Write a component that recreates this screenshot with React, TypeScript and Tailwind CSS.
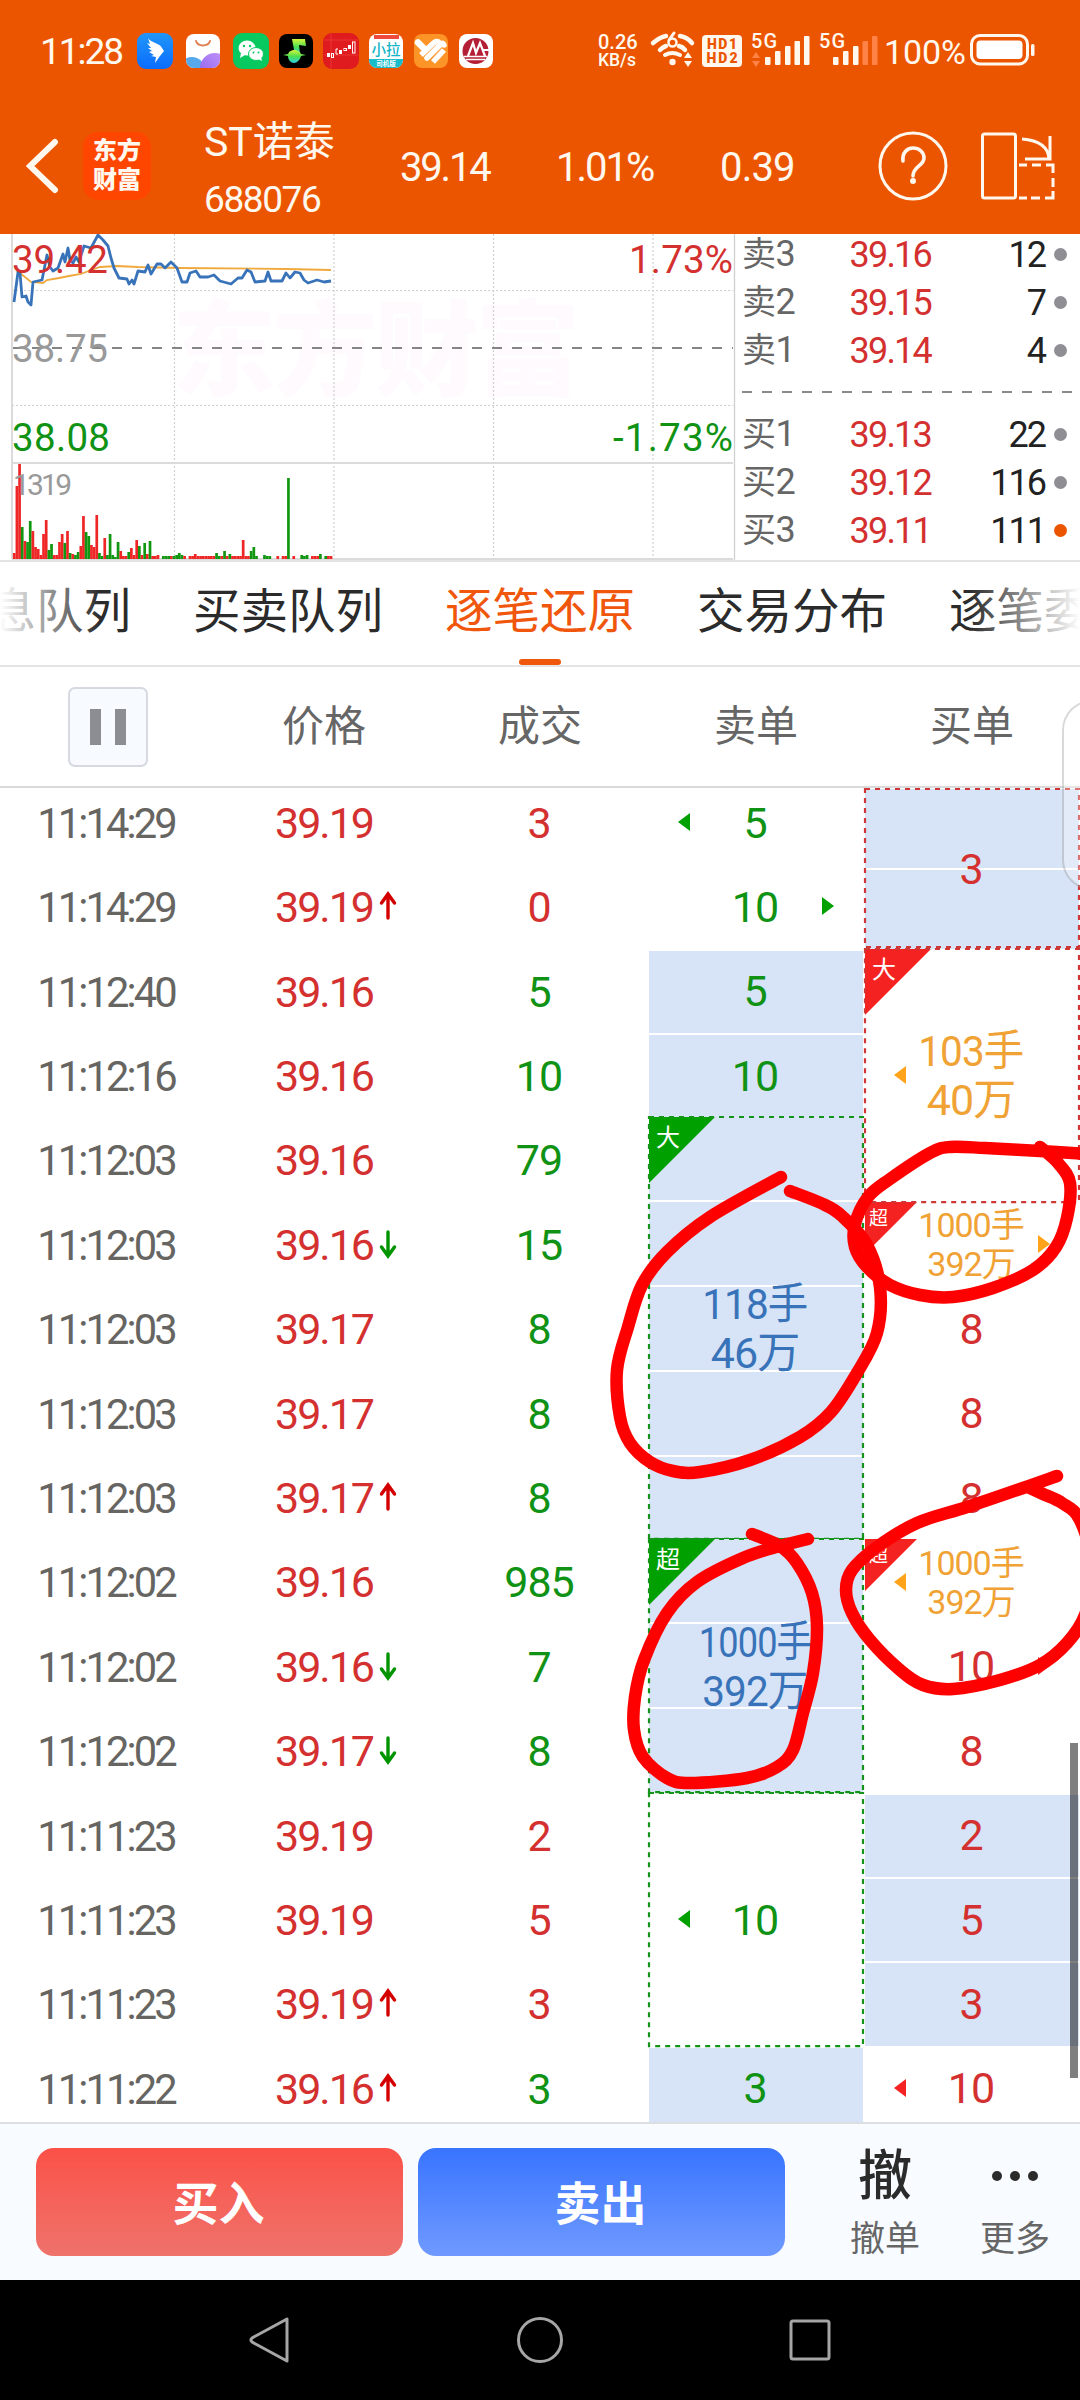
import React from 'react';
import clsx from 'clsx';

type Tone = 'red' | 'green' | 'orange' | 'blue';

interface Tick {
  time: string;
  price: string;
  dir?: 'up' | 'down';
  volume: string;
  tone: 'red' | 'green';
}

/**
 * One order in the sell / buy column. It may span several ticks.
 */
interface OrderBlock {
  span: string;
  rows: number;
  lines: string[];
  tone: Tone;
  filled?: boolean;
  framed?: 'red' | 'green';
  tag?: string;
  tagTone?: 'red' | 'green';
  arrow?: 'left' | 'right';
  small?: boolean;
  first?: boolean;
}

const TONE_TEXT: Record<Tone, string> = {
  red: 'text-[#d3302f]',
  green: 'text-[#109214]',
  orange: 'text-[#f0a235]',
  blue: 'text-[#3873b9]'
};

const TONE_FILL: Record<Tone, string> = {
  red: '#f52222',
  green: '#00a000',
  orange: '#ffa31a',
  blue: '#3873b9'
};

const TICKS: Tick[] = [
  { time: '11:14:29', price: '39.19', volume: '3', tone: 'red' },
  { time: '11:14:29', price: '39.19', dir: 'up', volume: '0', tone: 'red' },
  { time: '11:12:40', price: '39.16', volume: '5', tone: 'green' },
  { time: '11:12:16', price: '39.16', volume: '10', tone: 'green' },
  { time: '11:12:03', price: '39.16', volume: '79', tone: 'green' },
  { time: '11:12:03', price: '39.16', dir: 'down', volume: '15', tone: 'green' },
  { time: '11:12:03', price: '39.17', volume: '8', tone: 'green' },
  { time: '11:12:03', price: '39.17', volume: '8', tone: 'green' },
  { time: '11:12:03', price: '39.17', dir: 'up', volume: '8', tone: 'green' },
  { time: '11:12:02', price: '39.16', volume: '985', tone: 'green' },
  { time: '11:12:02', price: '39.16', dir: 'down', volume: '7', tone: 'green' },
  { time: '11:12:02', price: '39.17', dir: 'down', volume: '8', tone: 'green' },
  { time: '11:11:23', price: '39.19', volume: '2', tone: 'red' },
  { time: '11:11:23', price: '39.19', volume: '5', tone: 'red' },
  { time: '11:11:23', price: '39.19', dir: 'up', volume: '3', tone: 'red' },
  { time: '11:11:22', price: '39.16', dir: 'up', volume: '3', tone: 'green' }
];

const SELL_ORDERS: OrderBlock[] = [
  { span: 'row-span-1', rows: 1, lines: ['5'], tone: 'green', arrow: 'left' },
  { span: 'row-span-1', rows: 1, lines: ['10'], tone: 'green', arrow: 'right' },
  { span: 'row-span-1', rows: 1, lines: ['5'], tone: 'green', filled: true },
  { span: 'row-span-1', rows: 1, lines: ['10'], tone: 'green', filled: true },
  { span: 'row-span-5', rows: 5, lines: ['118手', '46万'], tone: 'blue', filled: true, framed: 'green', tag: '大', tagTone: 'green' },
  { span: 'row-span-3', rows: 3, lines: ['1000手', '392万'], tone: 'blue', filled: true, framed: 'green', tag: '超', tagTone: 'green' },
  { span: 'row-span-3', rows: 3, lines: ['10'], tone: 'green', framed: 'green', arrow: 'left' },
  { span: 'row-span-1', rows: 1, lines: ['3'], tone: 'green', filled: true }
];

const BUY_ORDERS: OrderBlock[] = [
  { span: 'row-span-2', rows: 2, lines: ['3'], tone: 'red', filled: true, framed: 'red', first: true },
  { span: 'row-span-3', rows: 3, lines: ['103手', '40万'], tone: 'orange', framed: 'red', tag: '大', tagTone: 'red', arrow: 'left' },
  { span: 'row-span-1', rows: 1, lines: ['1000手', '392万'], tone: 'orange', tag: '超', tagTone: 'red', arrow: 'right', small: true },
  { span: 'row-span-1', rows: 1, lines: ['8'], tone: 'red' },
  { span: 'row-span-1', rows: 1, lines: ['8'], tone: 'red' },
  { span: 'row-span-1', rows: 1, lines: ['8'], tone: 'red' },
  { span: 'row-span-1', rows: 1, lines: ['1000手', '392万'], tone: 'orange', tag: '超', tagTone: 'red', arrow: 'left', small: true },
  { span: 'row-span-1', rows: 1, lines: ['10'], tone: 'red', arrow: 'right' },
  { span: 'row-span-1', rows: 1, lines: ['8'], tone: 'red' },
  { span: 'row-span-1', rows: 1, lines: ['2'], tone: 'red', filled: true },
  { span: 'row-span-1', rows: 1, lines: ['5'], tone: 'red', filled: true },
  { span: 'row-span-1', rows: 1, lines: ['3'], tone: 'red', filled: true },
  { span: 'row-span-1', rows: 1, lines: ['10'], tone: 'red', arrow: 'left' }
];

const ASKS = [
  ['卖3', '39.16', '12'],
  ['卖2', '39.15', '7'],
  ['卖1', '39.14', '4']
];

const BIDS = [
  ['买1', '39.13', '22'],
  ['买2', '39.12', '116'],
  ['买3', '39.11', '111']
];

const TABS = ['信息队列', '买卖队列', '逐笔还原', '交易分布', '逐笔委托'];

const PRICE_LINE =
  '14,68 18,38 20,39 22,63 26,62 28,68 31,71 33,48 42,46 47,21 50,33 53,37 58,34 63,20 65,28 68,14 70,26 73,29 76,23 79,28 84,12 91,14 98,1 103,6 108,12 111,24 114,34 119,44 127,45 129,50 132,46 134,50 138,37 145,38 148,31 151,40 157,30 161,30 165,34 171,28 177,34 182,48 187,48 190,39 196,37 200,43 208,43 214,41 220,47 231,50 238,44 242,44 247,36 251,38 255,48 265,47 268,38 271,47 282,47 286,39 290,44 295,38 300,39 304,46 308,49 317,46 324,48 331,47';

const AVERAGE_LINE =
  '20,39 31,48 43,49 47,46 59,44 69,42 81,40 91,36 100,33 117,32 138,33 179,34 286,35 331,36';

// r = up minute, g = down minute, - = no trade
const VOLUME =
  'r6 r73 r95 g32 r18 g17 g38 r28 r12 r10 r4 r25 r39 g9 g15 r4 r4 r17 r25 g16 r28 g6 r5 g4 g7 r13 r43 g27 g23 r14 r12 r44 g6 g3 r21 g4 g25 g4 g2 g17 r8 r3 r3 g7 r11 r4 r19 g13 r4 g16 r5 g18 r3 r3 r4 - g3 g3 g3 r3 g3 g4 g6 g4 r3 - r3 r3 r5 r3 r3 r3 r3 r3 r3 r3 g6 g3 r3 g8 r3 g5 r3 r3 r3 r3 r19 r3 r3 g8 g12 g3 - - g4 g3 g3 - - r3 - r3 r3 g81 - r3 - - g4 g3 g4 - r3 r3 r3 g5 - g3 r3 r3'.split(' ');

const MARKS: number[][][] = [
  [[781, 1177], [710, 1217], [667, 1252], [642, 1285], [628, 1327], [617, 1370], [620, 1417], [630, 1443], [650, 1462], [673, 1471], [700, 1472], [750, 1460], [800, 1437], [831, 1412], [857, 1373], [877, 1333], [880, 1287], [867, 1245], [843, 1217], [823, 1204], [790, 1191]],
  [[1090, 1154], [1040, 1151], [985, 1148], [950, 1147], [930, 1153], [890, 1179], [868, 1197], [855, 1224], [855, 1247], [867, 1267], [890, 1285], [920, 1295], [953, 1297], [993, 1288], [1033, 1270], [1056, 1247], [1067, 1218], [1070, 1183], [1058, 1163], [1040, 1147]],
  [[808, 1539], [780, 1546], [743, 1558], [697, 1582], [667, 1613], [644, 1660], [635, 1697], [634, 1730], [643, 1757], [667, 1778], [690, 1783], [747, 1778], [777, 1767], [793, 1750], [803, 1713], [813, 1673], [817, 1627], [812, 1593], [797, 1563], [780, 1546], [752, 1534]],
  [[1057, 1476], [1023, 1488], [967, 1507], [917, 1523], [877, 1547], [852, 1570], [846, 1590], [852, 1613], [870, 1640], [900, 1670], [923, 1685], [953, 1689], [1000, 1680], [1040, 1665], [1067, 1643], [1085, 1615], [1094, 1570], [1080, 1520], [1062, 1503], [1043, 1494], [1028, 1487]]
];

// Catmull-Rom spline through the sampled points
const toSpline = (pts: number[][]) => {
  let d = `M${pts[0][0]} ${pts[0][1]}`;
  for (let i = 0; i < pts.length - 1; i++) {
    const p0 = pts[i - 1] || pts[i];
    const p1 = pts[i];
    const p2 = pts[i + 1];
    const p3 = pts[i + 2] || p2;
    d += `C${p1[0] + (p2[0] - p0[0]) / 6} ${p1[1] + (p2[1] - p0[1]) / 6} ${p2[0] - (p3[0] - p1[0]) / 6} ${p2[1] - (p3[1] - p1[1]) / 6} ${p2[0]} ${p2[1]}`;
  }
  return d;
};

const AppIcons: React.FC = () => (
  <svg width="360" height="40" viewBox="136 32 360 40">
    <defs>
      <linearGradient id="blueApp" x1="0" y1="0" x2="0" y2="1">
        <stop offset="0" stopColor="#2196f8" />
        <stop offset="1" stopColor="#0a6cff" />
      </linearGradient>
      <linearGradient id="noteApp" x1="0" y1="0" x2="0" y2="1">
        <stop offset="0" stopColor="#d5f53c" />
        <stop offset="0.5" stopColor="#4ade50" />
        <stop offset="1" stopColor="#2fd0e8" />
      </linearGradient>
      <linearGradient id="purpleApp" x1="0" y1="1" x2="1" y2="0">
        <stop offset="0" stopColor="#8b5ce8" />
        <stop offset="1" stopColor="#c79bff" />
      </linearGradient>
      <clipPath id="bagClip">
        <rect x="186" y="35" width="34" height="34" rx="8" />
      </clipPath>
      <clipPath id="cityClip">
        <rect x="369" y="35" width="34" height="34" rx="8" />
      </clipPath>
    </defs>

    {/* wing */}
    <rect x="137" y="34" width="36" height="36" rx="9" fill="url(#blueApp)" />
    <path d="M148 39c3 5 12 5 14 10l2 3-4 5-5 7 1-6-5-1 3-1-5-3 3-1-4-3 3 0-4-5 3 1z" fill="#fff" />

    {/* shopping bag */}
    <rect x="186" y="35" width="34" height="34" rx="8" fill="#fff" />
    <g clipPath="url(#bagClip)">
      <circle cx="192" cy="71" r="13" fill="#58a9ec" />
      <circle cx="215" cy="69" r="15" fill="url(#purpleApp)" />
    </g>
    <path d="M196 42c2 6 12 6 14 0" fill="none" stroke="#e08055" strokeWidth="2" strokeLinecap="round" />

    {/* chat bubbles */}
    <rect x="233" y="34" width="36" height="36" rx="9" fill="#08c960" />
    <ellipse cx="247" cy="49" rx="8.5" ry="7.5" fill="#fff" />
    <path d="M241 54l-1 5 5-3z" fill="#fff" />
    <ellipse cx="256" cy="55" rx="7.5" ry="6.5" fill="#fff" stroke="#08c960" strokeWidth="1" />
    <path d="M261 58l1 4-4-2z" fill="#fff" />
    <g fill="#08c960">
      <circle cx="244" cy="47" r="1.2" />
      <circle cx="250" cy="47" r="1.2" />
      <circle cx="253.500" cy="53.500" r="1" />
      <circle cx="258.500" cy="53.500" r="1" />
    </g>

    {/* music note */}
    <rect x="279" y="35" width="34" height="34" rx="8" fill="#000" />
    <path d="M292 40h13l1 7-7-1 1 9-5 1z" fill="url(#noteApp)" />
    <path d="M283 56l5-1c1-3 4-4 6-4s6 1 7 4l5 1-5 1c-1 4-4 7-7 7s-6-3-6-7z" fill="url(#noteApp)" />

    {/* candles */}
    <rect x="323" y="34" width="36" height="36" rx="9" fill="#e01b1f" />
    <path d="M324 41h34M324 56h34M331 35v34" stroke="#f0504f" strokeWidth="0.500" />
    <g fill="#fff">
      <rect x="327" y="54" width="3" height="4" />
      <rect x="339" y="51" width="3" height="4" />
      <rect x="348" y="46" width="3" height="4" />
    </g>
    <g fill="none" stroke="#fff" strokeWidth="1">
      <rect x="331.500" y="54.500" width="2" height="4" />
      <path d="M338 50h-2v5h2" />
      <rect x="344" y="49.500" width="2.500" height="2" />
      <rect x="352.500" y="43" width="2.500" height="11" />
    </g>

    {/* city delivery */}
    <rect x="369" y="35" width="34" height="34" rx="8" fill="#fff" />
    <g clipPath="url(#cityClip)">
      <rect x="369" y="60" width="34" height="10" fill="#18bccb" />
      <rect x="374" y="36" width="25" height="4" fill="#ee4b3e" />
    </g>
    <text x="386" y="56" fontSize="14.500" fontWeight="500" fill="#12b4c6" textAnchor="middle">小拉</text>
    <text x="386" y="67" fontSize="6.500" fontWeight="700" fill="#fff" textAnchor="middle">司机版</text>

    {/* orange heart stripes */}
    <rect x="414" y="35" width="34" height="34" rx="8" fill="#fd9428" />
    <g fill="none" stroke="#fff" strokeWidth="5.500">
      <path d="M418 43.500l7 7" strokeWidth="6.500" strokeLinecap="round" />
      <path d="M421 56l12-11.500q4-3.500 6-1" />
      <path d="M427 59l14-14q2-2 3 1" strokeLinecap="round" />
      <path d="M433 63l11-12" />
    </g>

    {/* bank */}
    <rect x="459" y="35" width="34" height="34" rx="8" fill="#fff" />
    <circle cx="475.500" cy="52" r="13" fill="#b51f35" />
    <path d="M464 57.500h23M466 60.500h19" stroke="#fff" strokeWidth="1.300" />
    <path d="M468 57l5-13 3 10 4-10 5 13M483 51h8" fill="none" stroke="#fff" strokeWidth="2.200" />
  </svg>
);

const StatusIcons: React.FC = () => (
  <svg width="392" height="44" viewBox="648 28 392 44" fill="#fff8ee">
    {/* wifi 6 */}
    <g fill="none" stroke="#fff8ee" strokeWidth="4.500" strokeLinecap="round">
      <path d="M653 42q7-6 13-7M680 35q7 1 12 7" />
      <path d="M660 49q3-3 6-4M679 45q4 1 6 4" />
      <path d="M665 54q7-4 15 0" strokeWidth="4" />
    </g>
    <path d="M674 32l-5 7" stroke="#fff8ee" strokeWidth="3" strokeLinecap="round" />
    <circle cx="672.500" cy="41.500" r="4" fill="none" stroke="#fff8ee" strokeWidth="2.500" />
    <circle cx="672.500" cy="61" r="3.200" />
    <path d="M684 57l4-6 4 6zM684 60l4 6 4-6z" />

    {/* HD badges */}
    <rect x="702" y="34" width="40" height="32" rx="4" />
    <g fill="#ec5500" fontSize="14" fontWeight="900" textAnchor="middle">
      <text x="722" y="48" textLength="30">HD1</text>
      <text x="722" y="62" textLength="31">HD2</text>
    </g>

    {/* signal bars */}
    <g fontSize="20" fontWeight="500">
      <text x="751" y="47" textLength="26">5G</text>
      <text x="819" y="47" textLength="26">5G</text>
    </g>
    <path d="M752 57l4-6 4 6zM752 60l4 6 4-6z" fill="#ff8346" />
    <g>
      <rect x="765" y="56" width="5.500" height="8" rx="1" />
      <rect x="775" y="50" width="5.500" height="14" rx="1" />
      <rect x="785" y="45" width="5.500" height="19" rx="1" />
      <rect x="794.500" y="40" width="5.500" height="24" rx="1" />
      <rect x="804" y="35" width="5.500" height="29" rx="1" />
      <rect x="833" y="56" width="5.500" height="8" rx="1" />
      <rect x="843" y="50" width="5.500" height="14" rx="1" />
      <rect x="853" y="45" width="5.500" height="19" rx="1" />
      <rect x="862.500" y="40" width="5.500" height="24" rx="1" fill="#ff8346" />
      <rect x="872" y="35" width="5.500" height="29" rx="1" fill="#ff8346" />
    </g>
    <text x="884" y="63" fontSize="34" textLength="82">100%</text>

    {/* battery */}
    <rect x="971.500" y="34.500" width="56" height="28.500" rx="8.500" fill="none" stroke="#fff8ee" strokeWidth="3" />
    <rect x="976.500" y="39.500" width="46" height="18.500" rx="4" fill="#fff" />
    <rect x="1031" y="43" width="3.500" height="12" rx="1.500" />
  </svg>
);

const Header: React.FC = () => (
  <header className="h-[234px] bg-[#ec5500] text-[#fff8ee]">
    <div className="flex h-[102px] items-center pl-[40px]">
      <span className="w-[96px] pt-px text-[37px] tracking-[-2px]">11:28</span>
      <AppIcons />
      <div className="ml-[102px] flex w-[50px] flex-col font-medium">
        <span className="text-[20px] leading-[18px]">0.26</span>
        <span className="text-[17.500px] leading-[18px]">KB/s</span>
      </div>
      <StatusIcons />
    </div>

    <div className="flex h-[128px] items-center pl-[26px]">
      <svg width="34" height="60" viewBox="0 0 34 60" fill="none" stroke="#fff8ee" strokeWidth="6" strokeLinecap="round">
        <path d="M29 6L4 30l25 24" />
      </svg>
      <div className="ml-[23px] flex size-[68px] flex-col items-center justify-center rounded-[15px] bg-[#ff4600] text-[24px] leading-[29px] font-black">
        <span>东方</span>
        <span>财富</span>
      </div>
      <div className="ml-[53px] flex w-[196px] flex-col pt-[11px]">
        <span className="text-[41px] leading-[56px]">ST诺泰</span>
        <span className="text-[37px] leading-[60px] tracking-[-1.4px]">688076</span>
      </div>
      <span className="w-[156px] pt-[3px] text-[40px] tracking-[-2.2px]">39.14</span>
      <span className="w-[164px] pt-[3px] text-[40px] tracking-[-2px]">1.01%</span>
      <span className="w-[157px] pt-[3px] text-[40px] tracking-[-0.8px]">0.39</span>
      <svg width="72" height="72" viewBox="0 0 72 72" fill="none" stroke="#fff8ee" strokeWidth="3">
        <circle cx="36" cy="36" r="33" />
        <path d="M26 31c-1-8 4-13 10-13s11 4 11 10c0 8-11 8-11 18" strokeWidth="3.600" strokeLinecap="round" />
        <circle cx="36" cy="51" r="3" fill="#fff8ee" stroke="none" />
      </svg>
      <svg className="ml-[31px]" width="76" height="72" viewBox="0 0 76 72" fill="none" stroke="#fff8ee" strokeWidth="3">
        <rect x="2.500" y="4" width="33" height="64" rx="2" />
        <path d="M42 9q26 2 27 20M70 6v23H45" />
        <path d="M39 35h8M52 35h9M66 35h7v8M73 48v9M73 61v7h-8M60 68h-9M47 68h-8" />
      </svg>
    </div>
  </header>
);

const PriceChart: React.FC = () => (
  <svg className="shrink-0" width="736" height="326" viewBox="0 0 736 326">
    <text x="172" y="154" fontSize="104" fontWeight="900" fill="#fefafe" textLength="408">东方财富</text>

    <g stroke="#cfcfcf" strokeDasharray="2 2" strokeWidth="1.200">
      <path d="M174.500 0V325M334 0V325M493.500 0V325M653 0V325" />
      <path d="M12 56.500H733M12 171.500H733" />
    </g>
    <path d="M12 114H733" stroke="#858585" strokeWidth="2" strokeDasharray="10 10" />
    <path d="M12 0V325M12 229H733M12 325H733" stroke="#dcdada" strokeWidth="2" fill="none" />
    <path d="M734.500 0V326" stroke="#cfcfcf" strokeWidth="1.300" />

    {VOLUME.map((bar, i) =>
      bar === '-' ? null : (
        <rect
          key={i}
          x={12.9 + i * 2.662}
          y={325 - Number(bar.slice(1))}
          width="2.700"
          height={bar.slice(1)}
          fill={bar[0] === 'r' ? '#ee2626' : '#109610'}
        />
      )
    )}
    <polyline points={AVERAGE_LINE} fill="none" stroke="#f0a93c" strokeWidth="1.800" />
    <polyline points={PRICE_LINE} fill="none" stroke="#3873b9" strokeWidth="2.800" strokeLinejoin="round" />

    <g fontSize="38.500">
      <text x="12" y="38.500" fill="#d3302f" textLength="96">39.42</text>
      <text x="12" y="127.500" fill="#999" textLength="96">38.75</text>
      <text x="12" y="216.500" fill="#109214" textLength="98">38.08</text>
      <text x="629" y="38.500" fill="#d3302f" textLength="104">1.73%</text>
      <text x="613" y="216.500" fill="#109214" textLength="120">-1.73%</text>
    </g>
    <text x="13" y="260.500" fontSize="30" fill="#999" textLength="59">1319</text>
  </svg>
);

const QuoteRow: React.FC<{ quote: string[]; hot?: boolean }> = ({ quote, hot }) => (
  <div className="flex h-[48px] items-center text-[36px]">
    <span className="w-[70px] tracking-[-0.500px] text-[#666]">
      <span className="text-[34px]">{quote[0][0]}</span>
      {quote[0][1]}
    </span>
    <span className="w-[119px] pt-px text-right tracking-[-1.800px] text-[#d3302f]">{quote[1]}</span>
    <span className="w-[114px] pt-px text-right tracking-[-2px] text-[#222]">{quote[2]}</span>
    <span className={clsx('ml-[9px] size-[13px] rounded-full', hot ? 'bg-[#ec5500]' : 'bg-[#8f8e94]')} />
  </div>
);

const OrderBook: React.FC = () => (
  <div className="-mt-[4px] flex flex-1 flex-col pl-[6px]">
    {ASKS.map((q) => (
      <QuoteRow key={q[0]} quote={q} />
    ))}
    <svg className="h-[36px] w-[332px]" viewBox="0 0 332 36">
      <path d="M0 18H332" stroke="#8a8a8a" strokeWidth="2" strokeDasharray="10 10" />
    </svg>
    {BIDS.map((q, i) => (
      <QuoteRow key={q[0]} quote={q} hot={i === 2} />
    ))}
  </div>
);

const TabBar: React.FC = () => (
  <nav className="relative flex h-[107px] overflow-hidden border-y-2 border-[#e4e4e4] bg-white">
    <div className="-ml-[60px] flex gap-[60px]">
      {TABS.map((tab, i) => (
        <div key={tab} className="flex w-[192px] shrink-0 flex-col items-center">
          <span
            className={clsx(
              'h-[97px] text-[47.500px] leading-[101px] whitespace-nowrap',
              i === 2 ? 'text-[#f0560c]' : 'text-[#2b2b2b]'
            )}
          >
            {tab}
          </span>
          {i === 2 && <span className="h-[6px] w-[42px] rounded-[3px] bg-[#f0560c]" />}
        </div>
      ))}
    </div>
    <div className="absolute inset-y-0 left-0 w-[100px] bg-linear-to-r from-white to-transparent" />
    <div className="absolute inset-y-0 right-0 w-[110px] bg-linear-to-l from-white to-transparent" />
  </nav>
);

const TableHead: React.FC = () => (
  <div className="grid h-[121px] grid-cols-5 items-center border-b-2 border-[#dadada] text-center text-[42px] text-[#666]">
    <div className="flex justify-center pr-px">
      <div className="flex size-[80px] items-center justify-center gap-[14px] rounded-[7px] border-2 border-[#d6d9e2] bg-[#f7faff]">
        <span className="h-[36px] w-[11px] bg-[#8c8d92]" />
        <span className="h-[36px] w-[11px] bg-[#8c8d92]" />
      </div>
    </div>
    <span>价格</span>
    <span>成交</span>
    <span>卖单</span>
    <span>买单</span>
  </div>
);

const PriceArrow: React.FC<{ dir: 'up' | 'down' }> = ({ dir }) => (
  <svg
    className={clsx('absolute top-[27px] left-[163px]', dir === 'down' && 'rotate-180')}
    width="18"
    height="30"
    viewBox="0 0 18 30"
    fill="none"
    stroke={dir === 'up' ? '#d40000' : '#009400'}
    strokeWidth="3.400"
    strokeLinecap="round"
  >
    <path d="M9 3v24M2.500 12L9 3l6.500 9" />
  </svg>
);

const OrderCell: React.FC<{ block: OrderBlock }> = ({ block }) => {
  const { rows, lines, tone, filled, framed, tag, tagTone, arrow, small, first } = block;
  const tagSize = small ? 52 : 66;

  return (
    <div className={clsx('relative flex flex-col', block.span, first && 'pt-[9px]', framed && 'z-10')}>
      {Array.from({ length: rows }, (_, i) => (
        <div key={i} className={clsx('mx-[1px] flex-1', filled && 'bg-[#d7e3f6]', (i > 0 || !framed) && 'border-t-2 border-white')} />
      ))}

      {tag && tagTone && (
        <svg className="absolute top-0 left-[1px]" width={tagSize} height={tagSize}>
          <path d={`M0 0H${tagSize}L0 ${tagSize}Z`} fill={TONE_FILL[tagTone]} />
          <text x={small ? 4 : 7} y={small ? 23 : 29} fontSize={small ? 19 : 24} fill="#fff">
            {tag}
          </text>
        </svg>
      )}

      {framed && (
        <svg className={clsx('absolute left-[1px] w-[214px] overflow-visible', first ? 'top-[9px] h-[158px]' : 'top-0 h-full')}>
          <rect
            width="100%"
            height="100%"
            fill="none"
            stroke={framed === 'red' ? '#cf3636' : '#149418'}
            strokeWidth="2.200"
            strokeDasharray="5 5"
          />
        </svg>
      )}

      <div
        className={clsx(
          'absolute inset-x-0 bottom-0 flex flex-col items-center justify-center pt-[2px] pr-[2px] tracking-[-1px]',
          first ? 'top-[9px]' : 'top-0',
          small ? 'text-[34px] leading-[39px]' : 'text-[43px] leading-[49px]',
          TONE_TEXT[tone]
        )}
      >
        {lines.map((line) => (
          <span
            key={line}
            className={clsx(!small && line.length > 4 && 'scale-x-[.84]', !small && line.length === 4 && 'scale-x-[.94]')}
          >
            {line}
          </span>
        ))}
      </div>

      {arrow && (
        <svg
          className={clsx('absolute top-1/2 -mt-[9px]', arrow === 'left' ? 'left-[30px]' : 'right-[30px]')}
          width="12"
          height="18"
        >
          <path d={arrow === 'left' ? 'M0 9L12 0V18Z' : 'M12 9L0 0V18Z'} fill={TONE_FILL[tone]} />
        </svg>
      )}
    </div>
  );
};

const TickTable: React.FC = () => (
  <div className="relative h-[1334px] overflow-hidden">
    <div className="-mt-[8.200px] flex items-start">
      <div className="w-[648px]">
        {TICKS.map((tick, i) => (
          <div key={i} className="grid h-[84.400px] grid-cols-3 text-center text-[43px] leading-[86px]">
            <span className="-translate-x-[2px] scale-x-[.97] tracking-[-3px] text-[#666562]">{tick.time}</span>
            <span className="relative tracking-[-2px] text-[#d3302f]">
              {tick.price}
              {tick.dir && <PriceArrow dir={tick.dir} />}
            </span>
            <span className={clsx('pr-[2px] tracking-[-1px]', TONE_TEXT[tick.tone])}>{tick.volume}</span>
          </div>
        ))}
      </div>
      {[SELL_ORDERS, BUY_ORDERS].map((orders, c) => (
        <div key={c} className="grid w-[216px] grid-rows-[repeat(16,84.400px)]">
          {orders.map((block, i) => (
            <OrderCell key={i} block={block} />
          ))}
        </div>
      ))}
    </div>
    {/* scroll thumb */}
    <div className="absolute top-[955px] right-[2px] z-20 h-[335px] w-[8px] bg-black/50" />
  </div>
);

const ActionBar: React.FC = () => (
  <footer className="flex h-[158px] border-t-2 border-[#dcdee2] bg-[#f8fbff] pt-[24px] pl-[36px]">
    <div className="flex h-[108px] w-[367px] items-center justify-center rounded-[18px] bg-linear-to-b from-[#fb5047] to-[#ee726b] pt-[4px] pr-[2px] text-[46px] font-bold text-white">
      买入
    </div>
    <div className="ml-[15px] flex h-[108px] w-[367px] items-center justify-center rounded-[18px] bg-linear-to-b from-[#3874ff] to-[#6f99ff] pt-[4px] pr-[2px] text-[46px] font-bold text-white">
      卖出
    </div>
    <div className="ml-[35px] flex w-[130px] flex-col items-center">
      <span className="pt-[2px] text-[54px] leading-[54px] font-medium text-[#2b2b2b]">撤</span>
      <span className="mt-[18px] text-[35px] leading-[36px] text-[#666]">撤单</span>
    </div>
    <div className="flex w-[130px] flex-col items-center">
      <div className="flex h-[56px] items-center gap-[8px]">
        <span className="size-[10px] rounded-full bg-[#2b2b2b]" />
        <span className="size-[10px] rounded-full bg-[#2b2b2b]" />
        <span className="size-[10px] rounded-full bg-[#2b2b2b]" />
      </div>
      <span className="mt-[18px] text-[35px] leading-[36px] text-[#666]">更多</span>
    </div>
  </footer>
);

const SystemNav: React.FC = () => (
  <div className="flex h-[120px] items-center justify-center gap-[222px] bg-black">
    <svg width="48" height="48" viewBox="0 0 48 48" fill="none" stroke="#a6a6a6" strokeWidth="3" strokeLinejoin="round">
      <path d="M41 3v42L6 26q-2-2 0-4z" />
    </svg>
    <svg width="48" height="48" viewBox="0 0 48 48" fill="none" stroke="#a6a6a6" strokeWidth="3">
      <circle cx="24" cy="24" r="21.500" />
    </svg>
    <svg width="48" height="48" viewBox="0 0 48 48" fill="none" stroke="#a6a6a6" strokeWidth="3">
      <rect x="5" y="5" width="38" height="38" rx="2" />
    </svg>
  </div>
);

const App: React.FC = () => (
  <div className="relative flex h-[2400px] w-[1080px] flex-col overflow-hidden bg-white font-['Roboto','Noto_Sans_CJK_SC',sans-serif]">
    <Header />
    <section className="flex h-[326px] overflow-hidden">
      <PriceChart />
      <OrderBook />
    </section>
    <TabBar />
    <TableHead />
    <TickTable />
    <ActionBar />
    <SystemNav />

    {/* side drawer handle */}
    <div className="absolute top-[700px] left-[1062px] z-20 h-[190px] w-[60px] rounded-[30px] border-2 border-black/15 bg-white/30" />

    {/* pen marks */}
    <svg className="pointer-events-none absolute top-0 left-0 z-30" width="1080" height="2400" viewBox="0 0 1080 2400">
      {MARKS.map((pts, i) => (
        <path key={i} d={toSpline(pts)} fill="none" stroke="#ff0000" strokeWidth="12.500" strokeLinecap="round" strokeLinejoin="round" />
      ))}
    </svg>
  </div>
);

export default App;
